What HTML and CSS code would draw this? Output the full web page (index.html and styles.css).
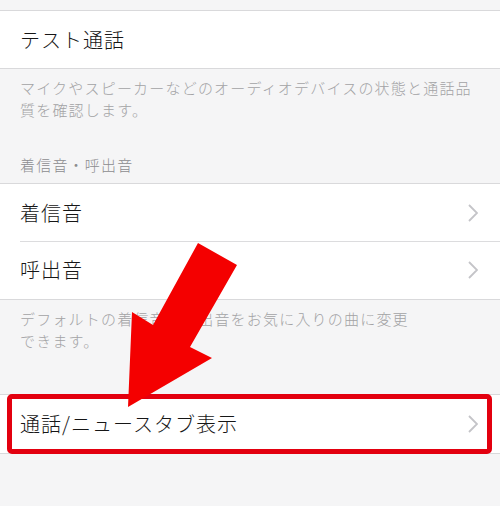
FILE: index.html
```html
<!DOCTYPE html>
<html lang="ja">
<head>
<meta charset="utf-8">
<link rel="stylesheet" href="styles.css">
</head>
<body>
<div class="page">
  <div class="spacer-top"></div>
  <div class="group">
    <div class="row"><span class="label">テスト通話</span></div>
  </div>
  <p class="note">マイクやスピーカーなどのオーディオデバイスの状態と通話品<br>質を確認します。</p>
  <p class="section">着信音・呼出音</p>
  <div class="group">
    <div class="row"><span class="label">着信音</span><svg class="chev" viewBox="0 0 10 18"><polyline points="1,1 9,9 1,17"/></svg></div>
    <div class="row sep"><span class="label">呼出音</span><svg class="chev" viewBox="0 0 10 18"><polyline points="1,1 9,9 1,17"/></svg></div>
  </div>
  <p class="note">デフォルトの着信音・呼出音をお気に入りの曲に変更<br>できます。</p>
  <div class="group last">
    <div class="row highlight"><span class="label">通話/ニュースタブ表示</span><svg class="chev" viewBox="0 0 10 18"><polyline points="1,1 9,9 1,17"/></svg></div>
  </div>
  <svg class="arrow" viewBox="0 0 500 506" width="500" height="506">
    <polygon points="198,243 237,265 190,347 212,358 128,407 132,312 153,325"/>
  </svg>
</div>
</body>
</html>
```

FILE: styles.css
```css
* { box-sizing: border-box; }
html, body {
  margin: 0;
  padding: 0;
  background: #f5f5f6;
}
body {
  font-family: "Noto Sans CJK JP", "Noto Sans", sans-serif;
}
.page {
  position: relative;
  width: 500px;
  height: 506px;
  overflow: hidden;
}
.spacer-top { height: 10px; }
.group {
  background: #fff;
  border-top: 1px solid #d9d9db;
  border-bottom: 1px solid #d9d9db;
}
.row {
  position: relative;
  height: 57px;
  display: flex;
  align-items: center;
  justify-content: space-between;
  padding: 0 22px 0 20px;
}
.row.sep { height: 58px; }
.row.sep::before {
  content: "";
  position: absolute;
  left: 20px;
  right: 0;
  top: 0;
  border-top: 1px solid #dcdcde;
}
.label {
  font-size: 20px;
  font-weight: 300;
  letter-spacing: 1px;
  color: #161616;
  line-height: 1;
}
.chev {
  width: 10px;
  height: 18px;
  fill: none;
  stroke: #c4c4c8;
  stroke-width: 1.8;
}
.note {
  margin: 0;
  padding: 8px 20px 0;
  font-size: 15px;
  font-weight: 300;
  letter-spacing: 1.2px;
  line-height: 22px;
  color: #a3a3a5;
  white-space: nowrap;
}
.section {
  margin: 0;
  padding: 33px 20px 7px;
  font-size: 15px;
  font-weight: 300;
  letter-spacing: 1.2px;
  line-height: 22px;
  color: #8c8c8f;
}
.group.last { margin-top: 42px; }
.row.highlight { height: 58px; }
.row.highlight::after {
  content: "";
  position: absolute;
  left: 7px;
  right: 8px;
  top: -1px;
  bottom: -1px;
  border: 5px solid #e3000f;
  border-radius: 5px;
}
.arrow {
  position: absolute;
  left: 0;
  top: 0;
  fill: #f40000;
}
```
